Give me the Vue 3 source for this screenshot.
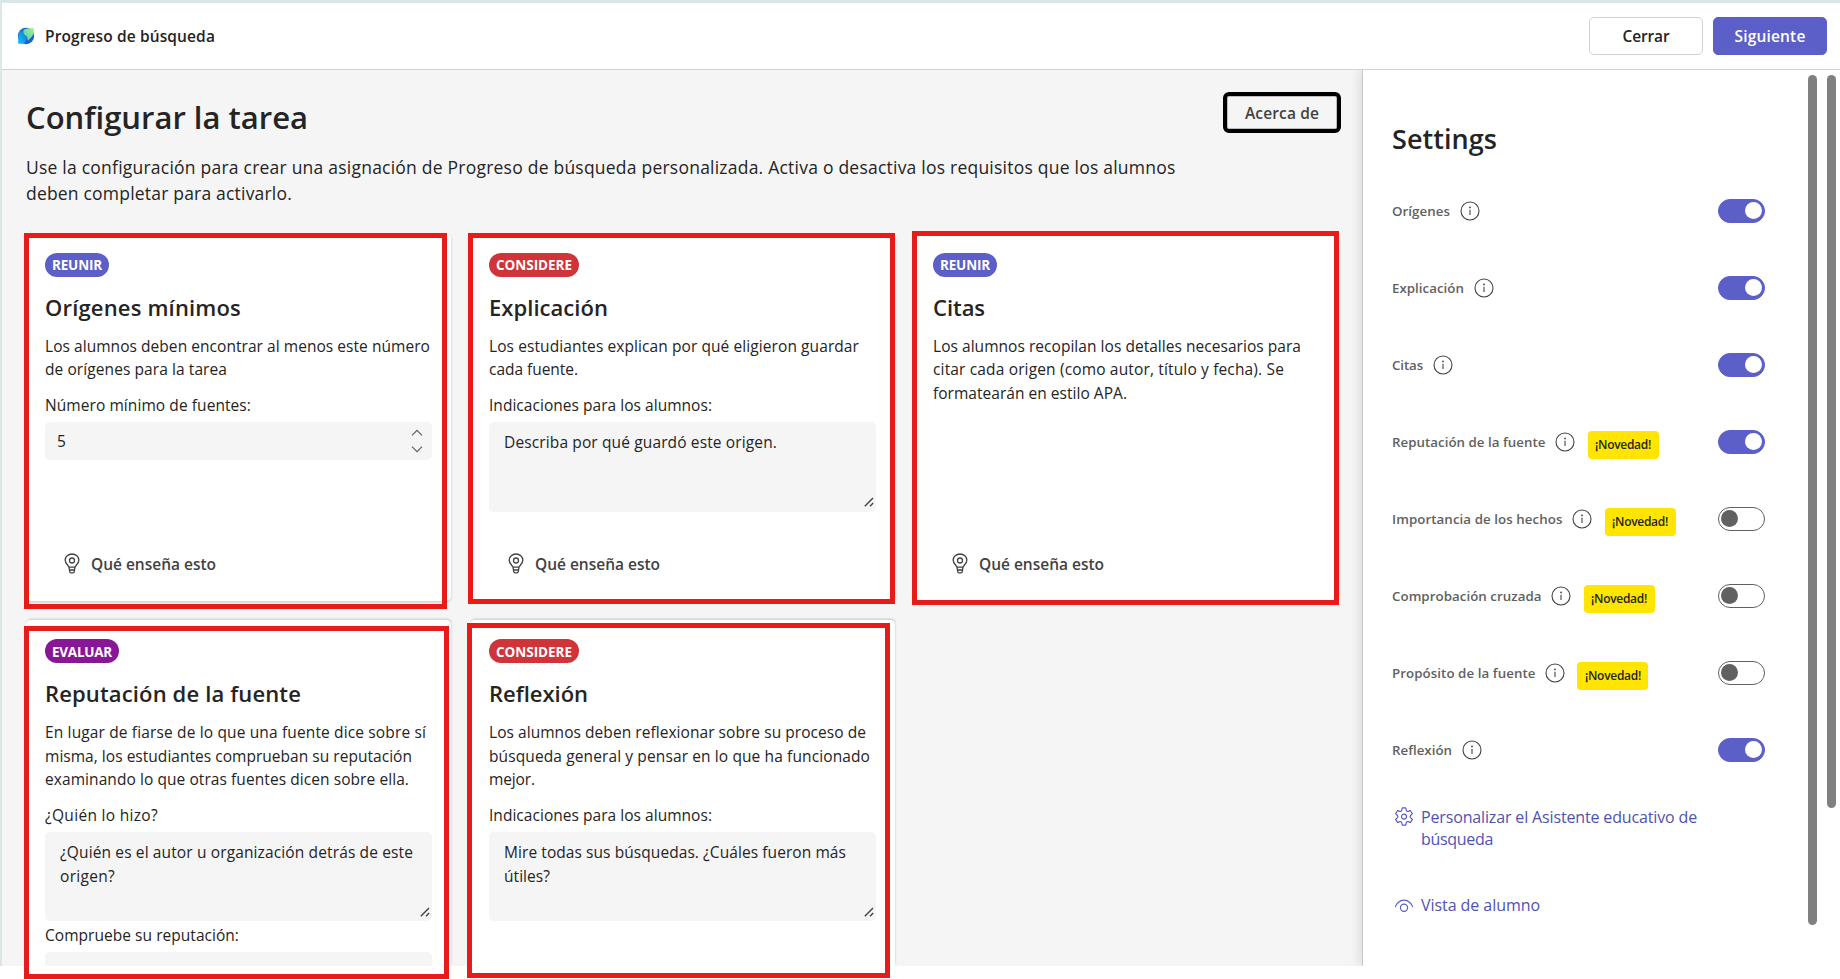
<script setup>
// v-fit spreads letter spacing so that a line of text fills a given width in px
const vFit = {
  mounted(el, { value }) {
    if (!value) return
    const natural = el.getBoundingClientRect().width
    const gap = (value - natural) / el.textContent.trim().length
    el.style.letterSpacing = gap.toFixed(3) + 'px'
  },
}

const rows = [
  [
    {
      tag: ['REUNIR', 50, 'violet'],
      title: ['Orígenes mínimos', 196],
      text: [
        ['Los alumnos deben encontrar al menos este número', 385],
        ['de orígenes para la tarea', 182],
      ],
      fields: [{ label: ['Número mínimo de fuentes:', 206], kind: 'number', value: [['5', 0]] }],
      mark: 'm1',
      teach: true,
    },
    {
      tag: ['CONSIDERE', 76, 'red'],
      title: ['Explicación', 119],
      text: [
        ['Los estudiantes explican por qué eligieron guardar', 370],
        ['cada fuente.', 89],
      ],
      fields: [
        {
          label: ['Indicaciones para los alumnos:', 223],
          kind: 'area',
          value: [['Describa por qué guardó este origen.', 273]],
        },
      ],
      mark: 'm2',
      teach: true,
    },
    {
      tag: ['REUNIR', 50, 'violet'],
      title: ['Citas', 52],
      text: [
        ['Los alumnos recopilan los detalles necesarios para', 368],
        ['citar cada origen (como autor, título y fecha). Se', 351],
        ['formatearán en estilo APA.', 194],
      ],
      fields: [],
      mark: 'm3',
      teach: true,
    },
  ],
  [
    {
      tag: ['EVALUAR', 60, 'purple'],
      title: ['Reputación de la fuente', 256],
      text: [
        ['En lugar de fiarse de lo que una fuente dice sobre sí', 381],
        ['misma, los estudiantes comprueban su reputación', 367],
        ['examinando lo que otras fuentes dicen sobre ella.', 364],
      ],
      fields: [
        {
          label: ['¿Quién lo hizo?', 113],
          kind: 'area',
          value: [
            ['¿Quién es el autor u organización detrás de este', 353],
            ['origen?', 55],
          ],
        },
        { label: ['Compruebe su reputación:', 194], kind: 'area', value: [] },
      ],
      mark: 'm4',
    },
    {
      tag: ['CONSIDERE', 76, 'red'],
      title: ['Reflexión', 99],
      text: [
        ['Los alumnos deben reflexionar sobre su proceso de', 377],
        ['búsqueda general y pensar en lo que ha funcionado', 381],
        ['mejor.', 46],
      ],
      fields: [
        {
          label: ['Indicaciones para los alumnos:', 223],
          kind: 'area',
          value: [
            ['Mire todas sus búsquedas. ¿Cuáles fueron más', 342],
            ['útiles?', 46],
          ],
        },
      ],
      mark: 'm5',
    },
  ],
]

const settings = [
  { name: 'Orígenes', w: 58, on: true },
  { name: 'Explicación', w: 72, on: true },
  { name: 'Citas', w: 31, on: true },
  { name: 'Reputación de la fuente', w: 153.5, on: true, fresh: true },
  { name: 'Importancia de los hechos', w: 170.5, on: false, fresh: true },
  { name: 'Comprobación cruzada', w: 149.5, on: false, fresh: true },
  { name: 'Propósito de la fuente', w: 143.5, on: false, fresh: true },
  { name: 'Reflexión', w: 60, on: true },
]
</script>

<template>
  <div class="page">
    <div class="window">
      <header class="topbar">
        <svg class="logo" width="18" height="18" viewBox="0 0 18 18">
          <defs>
            <linearGradient id="sea" x1="0" y1="1" x2="1" y2="0">
              <stop offset="0" stop-color="#12c0f2" />
              <stop offset="1" stop-color="#1478d4" />
            </linearGradient>
            <linearGradient id="land" x1="1" y1="0" x2="0" y2="1">
              <stop offset="0" stop-color="#a5f08a" />
              <stop offset="1" stop-color="#4fcfae" />
            </linearGradient>
          </defs>
          <circle cx="9" cy="9" r="8.200" fill="#1b5fcf" />
          <path d="M1.200 16.800V9.500C1.200 7 2.300 5 4 3.800c2 .4 2.600 2 3.800 3.200 2 2 2.600 4.200 1.200 6.800-.8 1.600-2 3-4 3z" fill="url(#sea)" />
          <path d="M6.500 2.800C9 1.300 12.500 1.200 16.600 1.200c.5 3.300.3 6-1.400 8-1.200 1.400-2.600 2.600-4 4.400-1.200-.9-.5-2.600-1.200-3.800-.7-1.200-2.300-1.500-3-2.800-.7-1.400-.8-2.800-.5-4.200z" fill="url(#land)" />
        </svg>
        <span class="app-name"><span v-fit="170">Progreso de búsqueda</span></span>
        <button class="btn"><span v-fit="47">Cerrar</span></button>
        <button class="btn primary"><span v-fit="71">Siguiente</span></button>
      </header>

      <div class="body">
        <main class="main">
          <div class="intro">
            <div class="intro-text">
              <h1><span v-fit="282">Configurar la tarea</span></h1>
              <p>
                <span v-fit="1149.5">Use la configuración para crear una asignación de Progreso de búsqueda personalizada. Activa o desactiva los requisitos que los alumnos</span>
              </p>
              <p><span v-fit="266">deben completar para activarlo.</span></p>
            </div>
            <button class="about"><span v-fit="74">Acerca de</span></button>
          </div>

          <div v-for="(row, r) in rows" :key="r" class="row" :class="{ cut: r === 1 }">
            <section v-for="c in row" :key="c.mark" class="card">
              <div class="card-body">
                <span class="tag" :class="c.tag[2]"><span v-fit="c.tag[1]">{{ c.tag[0] }}</span></span>
                <h2><span v-fit="c.title[1]">{{ c.title[0] }}</span></h2>
                <p v-for="t in c.text" :key="t[0]" class="line"><span v-fit="t[1]">{{ t[0] }}</span></p>
                <div v-for="(f, i) in c.fields" :key="i" class="field" :class="{ first: i === 0 }">
                  <div class="line"><span v-fit="f.label[1]">{{ f.label[0] }}</span></div>
                  <div class="control" :class="f.kind">
                    <div v-for="v in f.value" :key="v[0]" class="line"><span v-fit="v[1]">{{ v[0] }}</span></div>
                    <svg v-if="f.kind === 'number'" class="spin" width="12" height="24" viewBox="0 0 12 24">
                      <path d="M1 6.300 6 1.300l5 5M1 17.700l5 5 5-5" />
                    </svg>
                    <svg v-else class="grip" width="10" height="10" viewBox="0 0 10 10">
                      <path d="M.8 9.200 9 1M6 9.200 9.200 6" />
                    </svg>
                  </div>
                </div>
                <div v-if="c.teach" class="teach">
                  <svg width="16" height="21" viewBox="0 0 16 21">
                    <path d="M5 14.200C4.700 12.500 1.200 11 1.200 7.300a6.800 6.300 0 0 1 13.600 0c0 3.700-3.500 5.200-3.800 6.900zM5 14.200l.7 4.300c.1.800.6 1.300 1.400 1.300h1.800c.8 0 1.300-.5 1.400-1.300l.7-4.300M5.400 17h5.200" />
                    <circle cx="8" cy="7.500" r="2.500" />
                  </svg>
                  <span v-fit="125">Qué enseña esto</span>
                </div>
              </div>
              <i class="mark" :class="c.mark"></i>
            </section>
          </div>
        </main>

        <aside class="panel">
          <h3><span v-fit="105">Settings</span></h3>
          <div v-for="s in settings" :key="s.name" class="setting">
            <span class="name"><span v-fit="s.w">{{ s.name }}</span></span>
            <svg class="info" width="20" height="20" viewBox="0 0 20 20">
              <circle cx="10" cy="10" r="9" />
              <path d="M10 8.700v5.300" />
              <circle class="dot" cx="10" cy="6.400" r=".9" />
            </svg>
            <span v-if="s.fresh" class="new"><span v-fit="56">¡Novedad!</span></span>
            <span class="toggle" :class="{ on: s.on }"><i></i></span>
          </div>
          <a class="link gear">
            <svg width="20" height="20" viewBox="0 0 20 20">
              <path d="M8.300.9h3.400l.6 2.500c.2.800 1 1.300 1.800 1l2.400-.7 1.900 3-1.800 1.800c-.6.600-.6 1.500 0 2.100l1.800 1.800-1.900 3-2.400-.7c-.8-.3-1.600.2-1.800 1l-.6 2.500H8.300l-.6-2.500c-.2-.8-1-1.300-1.800-1l-2.400.7-1.900-3 1.800-1.800c.6-.6.6-1.500 0-2.100L1.600 6.700l1.900-3 2.400.7c.8.300 1.600-.2 1.800-1z" stroke-linejoin="round" />
              <circle cx="10" cy="9.600" r="2.500" />
            </svg>
            <span class="link-text">
              <span v-fit="276">Personalizar el Asistente educativo de</span><br />
              <span v-fit="72">búsqueda</span>
            </span>
          </a>
          <a class="link eye">
            <svg width="20" height="20" viewBox="0 0 20 20">
              <path d="M1.300 12.200C2.300 8.300 5.800 5.200 10 5.200s7.700 3.100 8.700 7" />
              <circle cx="10" cy="12.800" r="3.600" />
            </svg>
            <span class="link-text"><span v-fit="119">Vista de alumno</span></span>
          </a>
          <i class="scroll inner"></i>
          <i class="scroll outer"></i>
        </aside>
      </div>
    </div>
  </div>
</template>

<style>
body {
  background: #fff;
}
</style>

<style scoped>
.page {
  position: relative;
  height: 979px;
  overflow: hidden;
  background: #fff;
  color: #242424;
  font-family: 'Open Sans', 'Noto Sans', sans-serif;
}
.page * {
  box-sizing: border-box;
}
h1, h2, h3, p {
  margin: 0;
}
span {
  white-space: nowrap;
}
svg {
  flex: none;
  fill: none;
}
.window {
  height: 966px;
  border-top: 3px solid #dbe6e9;
  border-left: 2px solid #dbe6e9;
}
.topbar {
  display: flex;
  align-items: center;
  height: 67px;
  padding: 0 13px 1px 15px;
  border-bottom: 1px solid #d1d1d1;
  background: #fff;
}
.logo {
  margin-top: 1px;
}
.app-name {
  flex: 1;
  margin-left: 10px;
  font-size: 15.5px;
  font-weight: 600;
}
.btn {
  display: flex;
  align-items: center;
  justify-content: center;
  width: 114px;
  height: 38px;
  margin-left: 10px;
  padding: 0;
  border: 1px solid #d1d1d1;
  border-radius: 5px;
  background: #fff;
  color: #242424;
  font: 600 15.5px 'Open Sans', sans-serif;
}
.btn.primary {
  border-color: #5b5fc7;
  background: #5b5fc7;
  color: #fff;
}
.body {
  display: flex;
  height: 896px;
}
.main {
  width: 1360px;
  padding: 22px 0 0 24px;
  background: #f5f5f5;
}
.intro {
  display: flex;
  justify-content: space-between;
  height: 142px;
  padding-right: 21px;
}
h1 {
  height: 62px;
  font-size: 31px;
  font-weight: 600;
  line-height: 50px;
}
.intro p {
  font-size: 17.5px;
  line-height: 26px;
}
.intro-text {
  width: 1160px;
}
.about {
  flex: none;
  width: 118px;
  height: 41px;
  padding: 0;
  border: 4px solid #000;
  border-radius: 6px;
  box-shadow: inset 0 0 0 1px #bdbdbd;
  background: #f5f5f5;
  color: #424242;
  font: 600 15.5px 'Open Sans', sans-serif;
}
.row {
  display: flex;
  gap: 19px;
  margin-bottom: 19px;
}
.card {
  position: relative;
  width: 425px;
  height: 367px;
  border-radius: 5px;
  background: #fff;
  box-shadow: 0 1px 3px rgba(0, 0, 0, 0.2);
}
.card-body {
  display: flex;
  flex-direction: column;
  height: 100%;
  padding: 19px 19px 0;
  overflow: hidden;
}
.card-body > * {
  flex-shrink: 0;
}
/* second row is cut off by the bottom of the viewport */
.cut .card {
  height: 346px;
  border-radius: 5px 5px 0 0;
  box-shadow: 0 -1px 2px rgba(0, 0, 0, 0.07), 1px -2px 2px rgba(0, 0, 0, 0.07);
}
.tag {
  display: flex;
  align-items: center;
  align-self: flex-start;
  height: 24px;
  padding: 0 7px;
  border-radius: 12px;
  color: #fff;
  font-size: 13.5px;
  font-weight: 700;
}
.cut .tag {
  padding-top: 1px;
}
.violet { background: #5b5fc7; }
.red { background: #d13438; }
.purple { background: #881798; }
h2 {
  margin: 13px 0 10.7px;
  font-size: 22px;
  font-weight: 600;
  line-height: 34px;
}
.line {
  height: 23.6px;
  font-size: 15.5px;
  line-height: 23.6px;
}
.cut h2 {
  margin-bottom: 11.1px;
}
.field.first {
  margin-top: 12.2px;
}
.cut .field.first {
  margin-top: 12px;
}
.control {
  position: relative;
  width: 387px;
  margin-top: 4.5px;
  border-radius: 5px;
  background: #f5f5f5;
}
.control.number {
  height: 38px;
  padding: 8px 12px;
}
.control.area {
  height: 89.5px;
  margin-bottom: 2.5px;
  padding: 9px 15px;
}
.spin {
  position: absolute;
  right: 9px;
  top: 7px;
  stroke: #616161;
  stroke-width: 1.2;
}
.grip {
  position: absolute;
  right: 2px;
  bottom: 4.5px;
  stroke: #424242;
  stroke-width: 1.4;
}
.teach {
  display: flex;
  align-items: center;
  gap: 11px;
  margin-top: auto;
  padding: 0 0 26px 19px;
  color: #424242;
  font-size: 15.5px;
  font-weight: 600;
  line-height: 22px;
}
.teach svg {
  margin-top: -1px;
  stroke: #424242;
  stroke-width: 1.3;
}
/* highlight frames drawn over the cards */
.mark {
  position: absolute;
  z-index: 2;
  border: 5px solid #e81b1b;
}
.m1 { left: -2px; top: -1px; width: 423px; height: 376px; }
.m2 { left: -2px; top: -1px; width: 427px; height: 371px; }
.m3 { left: -2px; top: -3px; width: 427px; height: 374px; }
.m4 { left: -2px; top: 6px; width: 425px; height: 353px; }
.m5 { left: -3px; top: 3px; width: 423px; height: 355px; }
.panel {
  position: relative;
  z-index: 1;
  flex: 1;
  padding: 46px 75px 0 29px;
  border-left: 1px solid #c8c8c8;
  background: #fff;
  box-shadow: -3px 0 10px rgba(0, 0, 0, 0.1);
  clip-path: inset(0 0 0 -20px);
}
h3 {
  height: 56px;
  font-size: 27px;
  font-weight: 600;
  line-height: 46px;
}
.setting {
  display: flex;
  align-items: center;
  height: 77px;
}
.name {
  color: #616161;
  font-size: 13.3px;
  font-weight: 600;
}
.info {
  margin-left: 9.5px;
  stroke: #424242;
  stroke-width: 1.1;
}
.info .dot {
  fill: #424242;
  stroke: none;
}
.new {
  display: flex;
  align-items: center;
  justify-content: center;
  width: 71px;
  height: 28px;
  margin: 6px 0 0 12.5px;
  border-radius: 4px;
  background: #ffe500;
  font-size: 12px;
  font-weight: 600;
}
.toggle {
  display: flex;
  align-items: center;
  width: 47px;
  height: 24px;
  margin-left: auto;
  padding: 0 2px;
  border: 1px solid #616161;
  border-radius: 12px;
}
.toggle i {
  width: 17px;
  height: 17px;
  border-radius: 50%;
  background: #616161;
}
.toggle.on {
  justify-content: flex-end;
  border-color: #5b5fc7;
  background: #5b5fc7;
}
.toggle.on i {
  background: #fff;
}
.link {
  display: flex;
  gap: 7px;
  padding-left: 2px;
  color: #4f52b2;
  font-size: 16px;
  line-height: 22px;
}
.link svg {
  margin-top: 1px;
  stroke: #5b5fc7;
  stroke-width: 1.2;
}
.gear {
  height: 88px;
  margin-top: 18px;
}
.scroll {
  position: absolute;
  top: 5px;
  width: 9px;
  border-radius: 5px;
  background: #808080;
}
.inner { right: 23px; height: 850px; }
.outer { right: 4px; height: 733px; }
</style>
